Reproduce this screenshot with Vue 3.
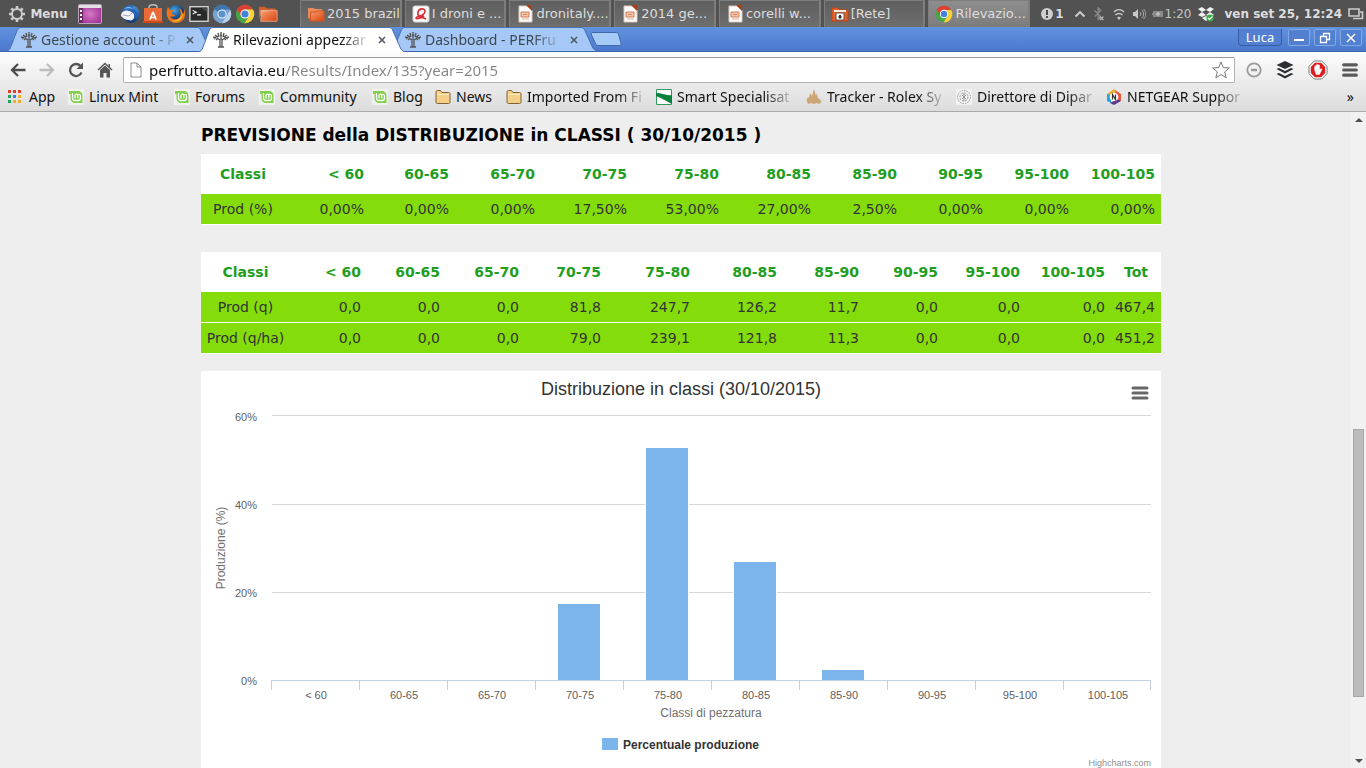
<script setup>
import { ref } from 'vue'

const launchers = [
  { id: 'mail', label: 'Thunderbird' },
  { id: 'store', label: 'Software' },
  { id: 'firefox', label: 'Firefox' },
  { id: 'terminal', label: 'Terminal' },
  { id: 'chromium', label: 'Chromium' },
  { id: 'chrome', label: 'Chrome' },
  { id: 'files', label: 'Files' },
]

const tasks = [
  { icon: 'folder-task', text: '2015 brazil' },
  { icon: 'pdf', text: 'I droni e ...' },
  { icon: 'slides', text: 'dronitaly....' },
  { icon: 'slides', text: '2014 ge...' },
  { icon: 'slides', text: 'corelli w...' },
  { icon: 'network', text: '[Rete]' },
  { icon: 'chrome', text: 'Rilevazio...', active: true },
]

const tabs = [
  { text: 'Gestione account - P' },
  { text: 'Rilevazioni appezzar', active: true },
  { text: 'Dashboard - PERFru' },
]

const bookmarks = [
  { icon: 'apps', text: 'App' },
  { icon: 'mint', text: 'Linux Mint' },
  { icon: 'mint', text: 'Forums' },
  { icon: 'mint', text: 'Community' },
  { icon: 'mint', text: 'Blog' },
  { icon: 'bm-folder', text: 'News' },
  { icon: 'bm-folder', text: 'Imported From Fi', long: true },
  { icon: 'smart', text: 'Smart Specialisat', long: true },
  { icon: 'tracker', text: 'Tracker - Rolex Sy', long: true },
  { icon: 'seal', text: 'Direttore di Dipar', long: true },
  { icon: 'netgear', text: 'NETGEAR Suppor', long: true },
]

const url = ref('perfrutto.altavia.eu/Results/Index/135?year=2015')

const classes = ['< 60', '60-65', '65-70', '70-75', '75-80', '80-85', '85-90', '90-95', '95-100', '100-105']

const percentTable = {
  widths: [84, 85, 85, 86, 92, 92, 92, 86, 86, 86, 86],
  head: ['Classi', ...classes],
  rows: [['Prod (%)', '0,00%', '0,00%', '0,00%', '17,50%', '53,00%', '27,00%', '2,50%', '0,00%', '0,00%', '0,00%']],
}

const quantityTable = {
  widths: [89, 77, 79, 79, 82, 89, 87, 82, 79, 82, 85, 50],
  head: ['Classi', ...classes, 'Tot'],
  rows: [
    ['Prod (q)', '0,0', '0,0', '0,0', '81,8', '247,7', '126,2', '11,7', '0,0', '0,0', '0,0', '467,4'],
    ['Prod (q/ha)', '0,0', '0,0', '0,0', '79,0', '239,1', '121,8', '11,3', '0,0', '0,0', '0,0', '451,2'],
  ],
}

const production = [0, 0, 0, 17.5, 53, 27, 2.5, 0, 0, 0]
const bars = production
  .map((value, i) => {
    const top = Math.round(310 - value * 4.4)
    return { x: 93 + 88 * i, y: top, height: 310 - top, value }
  })
  .filter((bar) => bar.value > 0)

const yTicks = [
  { label: '60%', line: 44, text: 50 },
  { label: '40%', line: 133, text: 138 },
  { label: '20%', line: 221, text: 226 },
  { label: '0%', line: null, text: 314 },
]
const xTicks = Array.from({ length: 11 }, (_, i) => Math.min(70 + 88 * i, 949))
</script>

<template>
  <svg class="sprite" aria-hidden="true">
    <defs>
      <linearGradient id="g-folder" x1="0" y1="0" x2="1" y2="1"><stop offset="0" stop-color="#f9a070" /><stop offset="1" stop-color="#d8430f" /></linearGradient>
      <radialGradient id="g-purple"><stop offset="0" stop-color="#d779c8" /><stop offset="1" stop-color="#a63c9a" /></radialGradient>
      <radialGradient id="g-fire" cx=".4" cy=".3"><stop offset="0" stop-color="#4aa8e0" /><stop offset="1" stop-color="#123a78" /></radialGradient>
      <linearGradient id="g-mail" x1="0" y1="0" x2="0" y2="1"><stop offset="0" stop-color="#4796dd" /><stop offset="1" stop-color="#123674" /></linearGradient>
    </defs>
    <symbol id="gear" viewBox="0 0 18 18">
      <circle cx="9" cy="9" r="5" fill="none" stroke="#ccc" stroke-width="2" />
      <path d="M9 1v3M9 14v3M1 9h3M14 9h3M3.300 3.300l2.200 2.200M12.500 12.500l2.200 2.200M3.300 14.700l2.200-2.200M12.500 5.500l2.200-2.200" stroke="#ccc" stroke-width="2.600" />
    </symbol>
    <symbol id="desktop" viewBox="0 0 24 20">
      <rect x=".5" y=".5" width="23" height="19" rx="1" fill="url(#g-purple)" stroke="#b9a3b6" />
      <path d="M1 1h22v3H1z" fill="#e4e0e4" /><path d="M1 4h4v15H1z" fill="#722769" />
      <path d="M2 6h2v2H2zM2 10h2v2H2zM2 14h2v2H2z" fill="#fff" />
    </symbol>
    <symbol id="mail" viewBox="0 0 20 20">
      <circle cx="11" cy="10" r="8.700" fill="url(#g-mail)" />
      <path d="M1 12c0-3 2-6 6-6 5 0 8 3 7 8-1 2-3 3-5 2-4 0-6-2-8-4z" fill="#f3f4f7" />
      <path d="M3 11l6 1 3-3" fill="none" stroke="#9aa9c0" />
      <path d="M2 8C3 2 9 0 14 2c-2 1-2 2-1 3 4 2 5 6 3 11 0-5-3-8-7-9-3-1-5 0-7 1z" fill="#2a66b3" />
      <path d="M4 5c3-3 6-3 9 0-3-1-6-1-9 0z" fill="#79bdf0" />
    </symbol>
    <symbol id="store" viewBox="0 0 20 20">
      <path d="M6 5V3c0-3 8-3 8 0v2" fill="none" stroke="#bbb" stroke-width="1.5" />
      <path d="M1 4h18v15H1z" fill="#ea6a36" /><path d="M0 17h20v2H0z" fill="#c64a1d" />
      <path d="M7 15.500l2.700-7h.600L13 15.500M8 13.500h4" fill="none" stroke="#fff" stroke-width="1.700" />
    </symbol>
    <symbol id="firefox" viewBox="0 0 20 20">
      <circle cx="10" cy="10" r="9" fill="url(#g-fire)" />
      <path d="M2 3C-1 9 1 19 10 19c8 0 11-8 8-14 0 3 0 4-1 5-1-4-2-5-4-6 2 3 3 9-2 11-4 1-6-1-7-3 2 1 4 1 5-1-2 0-3-1-3-2 0-2 1-2 2-3C6 6 5 6 4 6z" fill="#ee7619" />
      <path d="M17 9c0 6-5 10-11 8 7 0 10-5 11-8z" fill="#f9cb36" />
    </symbol>
    <symbol id="terminal" viewBox="0 0 22 18">
      <rect x="1" y="1" width="20" height="16" fill="#292b2b" stroke="#d5d5d5" stroke-width="1.5" />
      <path d="M4 5l4 2-4 2M9 10h4" fill="none" stroke="#fff" stroke-width="1.2" /><path d="M14 2h6v6z" fill="#484848" />
    </symbol>
    <symbol id="chromium" viewBox="0 0 20 20">
      <circle cx="10" cy="10" r="9.2" fill="#79a3cf" /><path d="M10 10L2 5.3A9.2 9.2 0 0 1 18 5.5h-8z" fill="#3f74ae" />
      <path d="M10 19.2L14.5 12l3.8-6A9.2 9.2 0 0 1 10 19.2z" fill="#b8d3ef" /><circle cx="10" cy="10" r="4.6" fill="#e9f2fb" /><circle cx="10" cy="10" r="3.6" fill="#5b92ca" />
    </symbol>
    <symbol id="chrome" viewBox="0 0 20 20">
      <circle cx="10" cy="10" r="9.2" fill="#45a847" /><path d="M10 10L2 5.4A9.2 9.2 0 0 1 18 5.5h-8z" fill="#dc4034" /><path d="M6 12L2 5.4l4-1 2 4z" fill="#dc4034" />
      <path d="M9.5 19.2L14.2 12 10 5.5h8A9.2 9.2 0 0 1 9.5 19.2z" fill="#fcd03a" /><circle cx="10" cy="10" r="4.6" fill="#fff" /><circle cx="10" cy="10" r="3.6" fill="#4483d8" />
    </symbol>
    <symbol id="files" viewBox="0 0 22 20">
      <path d="M1 16V2h7l2 2h9v3H4z" fill="#d1602a" /><path d="M3 6h14v6H3z" fill="#f4e7df" />
      <path d="M3 18l1-11h6l2-1h9v12z" fill="url(#g-folder)" stroke="#e8a481" />
    </symbol>
    <symbol id="folder-task" viewBox="0 0 18 16">
      <path d="M1 13V2h6l1 1h7v3z" fill="#e98a5b" /><path d="M3 15l1-9h5l1-1h7v10z" fill="url(#g-folder)" stroke="#d4551f" />
    </symbol>
    <symbol id="pdf" viewBox="0 0 18 18">
      <rect x="1" y="1" width="16" height="16" rx="2" fill="#fbfbfb" stroke="#d4d4d4" />
      <path d="M12 11c-4 2-7 0-6-4 1-4 7-4 7-1 0 2-2 4-5 5-2 1-4 1-4 2s2 1 4 0 4 0 6 1" fill="none" stroke="#d8303a" stroke-width="1.600" />
    </symbol>
    <symbol id="slides" viewBox="0 0 18 18">
      <path d="M3 1h8l5 4v12H3z" fill="#fff" stroke="#d9c8bd" /><path d="M10 0h6v6z" fill="#a5401b" />
      <path d="M5 7h8v5H5z" fill="#f6c5ac" stroke="#cf7d57" /><path d="M7 9.500h4" stroke="#d98562" /><path d="M6 14h7" stroke="#dcae97" />
    </symbol>
    <symbol id="network" viewBox="0 0 18 16">
      <path d="M1 14V2h6l2 2h8v11H1z" fill="#de6330" stroke="#c74310" /><path d="M3 4h12v2H3z" fill="#ffe9dc" /><path d="M5 7h8v7H5z" fill="#fff" stroke="#6b5146" /><path d="M8 12V10l1-1 1 1v2z" fill="#333" stroke="#333" />
    </symbol>
    <symbol id="alert" viewBox="0 0 14 14"><circle cx="7" cy="7" r="6" fill="#cfcfcf" /><path d="M7 3v5M7 9v2" stroke="#4b4b4b" stroke-width="2" /></symbol>
    <symbol id="caret" viewBox="0 0 12 8"><path d="M1.5 6.5L6 2l4.5 4.5" fill="none" stroke="#cfcfcf" stroke-width="1.8" /></symbol>
    <symbol id="bluetooth" viewBox="0 0 14 16"><path d="M2 4l7 7-3 3V1l3 3-7 7" fill="none" stroke="#8d8d8d" stroke-width="1.4" /><path d="M8 11l4 4M12 11l-4 4" stroke="#bbb" stroke-width="1.6" /></symbol>
    <symbol id="wifi" viewBox="0 0 14 14"><path d="M2 5c3-3 7-3 10 0M3.500 8c2-2 5-2 7 0" fill="none" stroke="#c9c9c9" stroke-width="1.5" /><path d="M5 10.500c1-1 3-1 4 0L7 13z" fill="#c9c9c9" /></symbol>
    <symbol id="speaker" viewBox="0 0 14 14"><path d="M1 5h2l3-3v10L3 9H1z" fill="#c9c9c9" /><path d="M8 5c1 1 1 3 0 4M10 3c2 2 2 6 0 8M11.500 2c3 3 3 7 0 10" fill="none" stroke="#aaa" /></symbol>
    <symbol id="battery" viewBox="0 0 12 8"><path d="M0 3h1V1h10v6H1V5H0z" fill="#8b8b8b" /><path d="M4 4h4M6 2v4" stroke="#d4d4d4" /></symbol>
    <symbol id="dropbox" viewBox="0 0 18 16">
      <path d="M5 1l4 3-4 2-4-3zM13 1l4 2-4 3-4-2zM5 6l4 3-4 2-4-2zM13 6l4 3-4 2-4-2zM5 12l4-2 4 2-4 3z" fill="#f1f1f1" />
      <circle cx="13" cy="12" r="3.6" fill="#35ad40" /><path d="M11 12l1.500 1.500 3-3" fill="none" stroke="#fff" stroke-width="1.200" />
    </symbol>
    <symbol id="screens" viewBox="0 0 16 12"><path d="M1 1h10v7H1zM5 10.500h9.500V4H12" fill="none" stroke="#ccc" stroke-width="1.600" /></symbol>
    <symbol id="tree" viewBox="0 0 16 16">
      <path d="M7 15V8L4 6M9 15V8l3-2M8 8V2M5 15h6" fill="none" stroke="#555" stroke-width="1.300" />
      <path d="M1 7l3-3M2 3l3 2M5 1l1 4M8 0v4M11 1l-1 4M14 3l-3 2M15 7l-3-2M0 5l3 1M16 5l-3 1M3 8l2-2M13 8l-2-2" stroke="#555" stroke-width="1.400" />
    </symbol>
    <symbol id="cross" viewBox="0 0 8 8"><path d="M1 1l6 6M7 1L1 7" stroke="#4d5660" stroke-width="1.500" /></symbol>
    <symbol id="back" viewBox="0 0 16 14"><path d="M15.500 7H2.500M8 1L2 7l6 6" fill="none" stroke="currentColor" stroke-width="2.300" /></symbol>
    <symbol id="reload" viewBox="0 0 16 16"><path d="M13.500 10.500A6 6 0 1 1 12.500 4" fill="none" stroke="#555" stroke-width="2.300" /><path d="M15 .500v6.500H8.500z" fill="#555" /></symbol>
    <symbol id="home" viewBox="0 0 16 16"><path d="M1 8l7-6.500L15 8" fill="none" stroke="#555" stroke-width="1.500" /><path d="M3 8l5-4.500L13 8v7.500H9.500V11h-3v4.500H3zM11.500 2H13v4l-1.500-1.500z" fill="#555" /></symbol>
    <symbol id="doc" viewBox="0 0 12 16"><path d="M1 1h6l4 4v10H1zM7 1v4h4" fill="#fff" stroke="#8b8b8b" /></symbol>
    <symbol id="star" viewBox="0 0 18 18"><path d="M9 1l2.300 5.600 6 .400-4.600 3.900 1.500 5.900L9 13.500l-5.200 3.300 1.500-5.900L.700 7l6-.400z" fill="#fff" stroke="#777" /></symbol>
    <symbol id="minus-circle" viewBox="0 0 16 16"><circle cx="8" cy="8" r="6.700" fill="none" stroke="#9b9b9b" stroke-width="1.800" /><path d="M5 8h6" stroke="#9b9b9b" stroke-width="2.500" /></symbol>
    <symbol id="buffer" viewBox="0 0 18 18"><path d="M9 0l8.500 4L9 8 .500 4zM.500 8l2.500-1 6 3 6-3 2.500 1L9 12.500zM.500 13L3 12l6 3 6-3 2.500 1L9 17.500z" fill="#2b2f33" /></symbol>
    <symbol id="stop" viewBox="0 0 20 20">
      <path d="M6.300 1h7.400L19 6.300v7.400L13.700 19H6.300L1 13.700V6.300z" fill="#fff" stroke="#777" /><path d="M7 2.800h6l4.200 4.200v6L13 17.200H7L2.800 13V7z" fill="#de1a1a" />
      <path d="M6.500 9.500V6.500h1.200V9V5h1.300v4-4.500h1.300V9 5h1.300v5l1.500-1.500 1 .800-2.600 5.200H8z" fill="#fff" stroke="#fff" stroke-width=".4" />
    </symbol>
    <symbol id="bars" viewBox="0 0 14 14"><path d="M1.500 2.500h11M1.500 7h11M1.500 11.500h11" stroke="#5a5a5a" stroke-width="2.800" stroke-linecap="round" /></symbol>
    <symbol id="apps" viewBox="0 0 16 16">
      <path d="M0 1h3v3H0zM5 1h3v3H5zM10 1h3v3H10z" fill="#e33e2b" /><path d="M0 6h3v3H0z" fill="#1ea45c" /><path d="M5 6h3v3H5z" fill="#3f7de8" /><path d="M10 6h3v3H10zM5 11h3v3H5zM10 11h3v3H10z" fill="#efb026" /><path d="M0 11h3v3H0z" fill="#1ea45c" />
    </symbol>
    <symbol id="mint" viewBox="0 0 16 16">
      <path d="M0 0h16v16H0z" fill="#f1f1ef" /><path d="M1 2h9a4.500 4.500 0 0 1 4.500 4.500V14H7a4.500 4.500 0 0 1-4.500-4.500V5H1z" fill="#82cf49" />
      <path d="M4.500 4v5a2.500 2.500 0 0 0 2.500 2.500h3A2.500 2.500 0 0 0 12.500 9V7a1.500 1.500 0 0 0-2.700-1A1.500 1.500 0 0 0 7 7v2.500M9.800 6.500v3" fill="none" stroke="#fff" stroke-width="1.300" />
    </symbol>
    <symbol id="bm-folder" viewBox="0 0 16 16"><path d="M1 13V3c0-1 .500-1.500 1.500-1.500h3L7 3.500h6.500c1 0 1.500.500 1.500 1.500v8c0 1-.500 1.500-1.500 1.500h-11C1.500 14.500 1 14 1 13z" fill="#f4cf87" stroke="#80603b" /><path d="M2 5.500h12" stroke="#fff0cb" /></symbol>
    <symbol id="smart" viewBox="0 0 16 16"><path d="M.500.500h15v15H.500z" fill="#fff" stroke="#319b5c" /><path d="M0 4c6 0 10 3 16 2v9C10 12 6 9 0 7z" fill="#05803d" /></symbol>
    <symbol id="tracker" viewBox="0 0 16 16"><path d="M2 15L.500 11 2 8l1 1 1-5 2 3 2-7 2 7 1-3 1 6 1-1 2.500 4L13 15l-2-1-3 1-3-1z" fill="#cca576" /></symbol>
    <symbol id="seal" viewBox="0 0 16 16"><path d="M0 0h16v16H0z" fill="#f2f2f2" /><g fill="none" stroke="#999"><circle cx="8" cy="8" r="6.500" stroke-dasharray="1.500 1" /><circle cx="8" cy="8" r="4" stroke-dasharray="2 1" /><path d="M6 6l4 4M10 6l-4 4M8 4v8" /></g></symbol>
    <symbol id="netgear" viewBox="0 0 16 16"><path d="M8 0L1 5l3 4 7-6z" fill="#f2b22d" /><path d="M1 5v7l4 2V6z" fill="#24a6db" /><path d="M4 14l4 2 7-4-2-3z" fill="#5f388c" /><path d="M9 1l6 4v7l-4-2z" fill="#e9573f" /><circle cx="8" cy="8" r="4.300" fill="#fff" /><path d="M6.500 10.500v-5l3 5v-5" fill="none" stroke="#333" stroke-width="1.200" /></symbol>
    <symbol id="win-min" viewBox="0 0 12 12"><path d="M1 8h10" stroke="#fff" stroke-width="2" /></symbol>
    <symbol id="win-max" viewBox="0 0 12 12"><path d="M1.500 4.500h6v6h-6zM4.500 4V1.500h6v6H8" fill="none" stroke="#fff" stroke-width="1.300" /></symbol>
    <symbol id="win-close" viewBox="0 0 12 12"><path d="M2 2l8 8M10 2l-8 8" stroke="#fff" stroke-width="1.500" /></symbol>
  </svg>

  <div class="desktop">
    <header class="panel">
      <button class="menu"><svg class="i18"><use href="#gear" /></svg>Menu</button>
      <button class="show-desktop" aria-label="Desktop"><svg class="i-desktop"><use href="#desktop" /></svg></button>
      <nav class="launchers">
        <button v-for="item in launchers" :key="item.id" :aria-label="item.label"><svg class="i20"><use :href="'#' + item.id" /></svg></button>
      </nav>
      <div class="tasks">
        <button v-for="task in tasks" :key="task.text" class="task" :class="{ active: task.active }">
          <svg class="i18"><use :href="'#' + task.icon" /></svg><span>{{ task.text }}</span>
        </button>
      </div>
      <div class="tray">
        <span class="tray-item strong"><svg class="i14"><use href="#alert" /></svg>1</span>
        <svg class="i-caret"><use href="#caret" /></svg>
        <svg class="i14"><use href="#bluetooth" /></svg>
        <svg class="i14"><use href="#wifi" /></svg>
        <svg class="i14"><use href="#speaker" /></svg>
        <span class="tray-item"><svg class="i-battery"><use href="#battery" /></svg>1:20</span>
        <svg class="i18"><use href="#dropbox" /></svg>
        <time class="clock">ven set 25, 12:24</time>
        <svg class="i16"><use href="#screens" /></svg>
      </div>
    </header>

    <div class="tabstrip">
      <div v-for="tab in tabs" :key="tab.text" class="tab" :class="{ active: tab.active }">
        <svg class="tab-shape" viewBox="0 0 210 25" preserveAspectRatio="none" aria-hidden="true">
          <path d="M0 25C4 25 5 23 6 20L12 4C13 1 14 .500 17 .500H191C194 .500 195 1 196 4L203 20C204 23 206 25 210 25" />
        </svg>
        <svg class="i16"><use href="#tree" /></svg>
        <a href="#" class="tab-title">{{ tab.text }}</a>
        <button aria-label="Chiudi"><svg class="i8"><use href="#cross" /></svg></button>
      </div>
      <button class="new-tab" aria-label="Nuova scheda">
        <svg viewBox="0 0 32 16"><path d="M3 1.500h22c2 0 3 .500 3.500 2L31 12c.500 2 0 2.500-2 2.500H9c-2 0-3-.500-3.500-2L1.500 4C1 2 1 1.500 3 1.500z" fill="#a7cbf7" stroke="#3f68ab" /></svg>
      </button>
      <div class="window-controls">
        <button class="user">Luca</button>
        <button aria-label="Riduci"><svg class="i12"><use href="#win-min" /></svg></button>
        <button aria-label="Ripristina"><svg class="i12"><use href="#win-max" /></svg></button>
        <button aria-label="Chiudi finestra"><svg class="i12"><use href="#win-close" /></svg></button>
      </div>
    </div>

    <div class="chrome-bars">
      <div class="toolbar">
        <button aria-label="Indietro"><svg class="i16 dark"><use href="#back" /></svg></button>
        <button aria-label="Avanti"><svg class="i16 faded forward"><use href="#back" /></svg></button>
        <button aria-label="Ricarica"><svg class="i16"><use href="#reload" /></svg></button>
        <button aria-label="Home"><svg class="i16"><use href="#home" /></svg></button>
        <div class="omnibox">
          <svg class="i16"><use href="#doc" /></svg>
          <input v-model="url" type="text" aria-label="Indirizzo" />
          <button aria-label="Preferiti"><svg class="i18"><use href="#star" /></svg></button>
        </div>
        <div class="extensions">
          <button aria-label="Zoom"><svg class="i16"><use href="#minus-circle" /></svg></button>
          <button aria-label="Buffer"><svg class="i18"><use href="#buffer" /></svg></button>
          <button aria-label="Blocco annunci"><svg class="i20"><use href="#stop" /></svg></button>
          <button aria-label="Menu del browser"><svg class="i16"><use href="#bars" /></svg></button>
        </div>
      </div>
      <nav class="bookmarks">
        <a v-for="mark in bookmarks" :key="mark.text" href="#" :class="{ long: mark.long }">
          <svg class="i16"><use :href="'#' + mark.icon" /></svg><span>{{ mark.text }}</span>
        </a>
        <button class="more" aria-label="Altri preferiti">»</button>
      </nav>
    </div>

    <div class="viewport">
      <main>
        <div class="content">
          <h3>PREVISIONE della DISTRIBUZIONE in CLASSI ( 30/10/2015 )</h3>
          <table v-for="(table, t) in [percentTable, quantityTable]" :key="t">
            <colgroup><col v-for="(w, i) in table.widths" :key="i" :style="{ width: w + 'px' }" /></colgroup>
            <thead>
              <tr><th v-for="cell in table.head" :key="cell" scope="col" :class="{ tot: cell === 'Tot' }">{{ cell }}</th></tr>
            </thead>
            <tbody>
              <tr v-for="row in table.rows" :key="row[0]">
                <th scope="row">{{ row[0] }}</th>
                <td v-for="(cell, i) in row.slice(1)" :key="i">{{ cell }}</td>
              </tr>
            </tbody>
          </table>

          <section class="chart">
            <svg viewBox="0 0 960 400" role="img" aria-label="Distribuzione in classi">
              <text class="title" x="480" y="24">Distribuzione in classi (30/10/2015)</text>
              <g v-for="tick in yTicks" :key="tick.label">
                <rect v-if="tick.line" class="grid" x="71" :y="tick.line" width="879" height="1" />
                <text class="label end" x="56" :y="tick.text">{{ tick.label }}</text>
              </g>
              <rect v-for="bar in bars" :key="bar.x" class="bar" :x="bar.x" :y="bar.y" width="42" :height="bar.height" />
              <rect class="axis" x="70" y="309" width="880" height="1" />
              <rect v-for="x in xTicks" :key="x" class="axis" :x="x" y="310" width="1" height="9" />
              <text v-for="(name, i) in classes" :key="name" class="label" :x="115 + 88 * i" y="328">{{ name }}</text>
              <text class="axis-title" x="510" y="346">Classi di pezzatura</text>
              <text class="axis-title" transform="translate(24 177) rotate(-90)">Produzione (%)</text>
              <rect class="legend-key" x="401" y="367" width="16" height="12" />
              <text class="legend" x="422" y="378">Percentuale produzione</text>
              <a href="#"><text class="credits" x="950" y="395">Highcharts.com</text></a>
            </svg>
            <button class="chart-menu" aria-label="Menu del grafico">
              <svg viewBox="0 0 18 14"><path d="M2 2h14M2 7h14M2 12h14" stroke="#666" stroke-width="3" stroke-linecap="round" /></svg>
            </button>
          </section>
        </div>
      </main>
      <div class="scrollbar" aria-hidden="true">
        <svg viewBox="0 0 8 4"><path d="M0 4l4-4 4 4z" fill="#505050" /></svg>
        <div class="track"><div class="thumb"></div></div>
        <svg viewBox="0 0 8 4"><path d="M0 0l4 4 4-4z" fill="#505050" /></svg>
      </div>
    </div>
  </div>
</template>

<style>
body {
  overflow: hidden;
}
</style>

<style scoped>
* {
  box-sizing: border-box;
}
button {
  padding: 0;
  border: 0;
  background: none;
  font: inherit;
  color: inherit;
  display: flex;
  align-items: center;
  justify-content: center;
}
a {
  color: inherit;
  text-decoration: none;
}
svg {
  flex: none;
  display: block;
}
.sprite {
  position: absolute;
  width: 0;
  height: 0;
}
.i8 { width: 8px; height: 8px; }
.i12 { width: 12px; height: 12px; }
.i14 { width: 14px; height: 14px; }
.i16 { width: 16px; height: 16px; }
.i18 { width: 18px; height: 18px; }
.i20 { width: 20px; height: 20px; }
.i-desktop { width: 24px; height: 20px; }
.i-caret { width: 12px; height: 8px; }
.i-battery { width: 12px; height: 8px; }
.dark { color: #4d4d4d; }
.faded { color: #bdbdbd; }
.forward { transform: rotate(180deg); }

.desktop {
  height: 100vh;
  display: flex;
  flex-direction: column;
  overflow: hidden;
  background: #eee;
}

/* System panel */
.panel {
  display: flex;
  align-items: center;
  height: 27px;
  flex: none;
  background: #525252;
  color: #ddd;
  font: 12px/16px "DejaVu Sans", sans-serif;
}
.menu {
  margin-left: 7px;
  width: 62px;
  gap: 4px;
  font-weight: bold;
}
.show-desktop {
  margin: 0 16px 0 9px;
}
.launchers {
  display: flex;
  gap: 3px;
  margin: 0 22px 0 2px;
}
.tasks {
  flex: 1;
  display: flex;
  gap: 3px;
  height: 27px;
}
.task {
  flex: 1;
  min-width: 0;
  justify-content: flex-start;
  gap: 2px;
  padding-left: 6px;
  font-size: 13px;
  white-space: nowrap;
  background: linear-gradient(#5f5f5f, #6e6e6e);
  border: 1px solid #7d7d7d;
  border-right-width: 2px;
  border-bottom-width: 0;
}
.task.active {
  background: linear-gradient(#8e8e8e, #7c7c7c);
}
.tray {
  display: flex;
  align-items: center;
  gap: 6px;
  margin: 0 2px 0 10px;
}
.tray-item {
  display: flex;
  align-items: center;
  gap: 1px;
  color: #c4c4c4;
}
.strong,
.clock {
  font-weight: bold;
  color: #ddd;
}
.strong {
  margin-right: 4px;
}
.clock {
  margin-left: 3px;
}

/* Tabs */
.tabstrip {
  display: flex;
  align-items: flex-end;
  height: 25px;
  flex: none;
  background: linear-gradient(#6192de, #4b79cd);
  border-bottom: 1px solid #3a62ad;
  padding-left: 5px;
  font: 14px/20px "Noto Sans", sans-serif;
  color: #3f4750;
}
.tab {
  position: relative;
  display: flex;
  align-items: center;
  width: 210px;
  height: 24px;
  margin-right: -18px;
  padding: 1px 18px 0 16px;
  gap: 4px;
}
.tab-shape {
  position: absolute;
  inset: 0;
  width: 100%;
  height: 100%;
  fill: #a6c8f6;
  stroke: #4670b3;
}
.tab > :not(.tab-shape) {
  position: relative;
}
.tab.active {
  z-index: 1;
  height: 25px;
  margin-bottom: -1px;
  padding-top: 0;
  color: #111;
}
.tab.active .tab-shape {
  fill: #fff;
}
.tab-title {
  flex: 1;
  white-space: nowrap;
  mask-image: linear-gradient(to right, #000 calc(100% - 30px), transparent);
}
.tab button {
  width: 14px;
}
.new-tab {
  align-self: center;
  margin-left: 9px;
}
.new-tab svg {
  width: 32px;
  height: 16px;
}
.window-controls {
  display: flex;
  align-self: flex-start;
  gap: 4px;
  margin: 2px 4px 0 auto;
}
.window-controls button {
  width: 22px;
  height: 17px;
  border: 1px solid #82a8e6;
  border-radius: 2px;
  background: #527fcf;
}
.window-controls .user {
  width: 44px;
  margin-right: 2px;
  border-color: #365ea6;
  border-top: 0;
  border-radius: 0 0 4px 4px;
  font-size: 13px;
  color: #fff;
}

/* Navigation and bookmarks */
.chrome-bars {
  flex: none;
  background: linear-gradient(#fdfdfd, #dcdcdc);
  border-bottom: 1px solid #aaa;
  padding-top: 5px;
}
.toolbar {
  display: flex;
  align-items: center;
  height: 26px;
  padding-left: 3px;
}
.toolbar > button {
  width: 29px;
}
.omnibox {
  flex: 1;
  display: flex;
  align-items: center;
  height: 26px;
  margin-left: 4px;
  padding: 0 4px;
  background: #fff;
  border: 1px solid #b3b3b3;
  border-top-color: #999;
  border-radius: 2px;
}
.omnibox input {
  flex: 1;
  min-width: 0;
  margin-left: 5px;
  padding: 0;
  border: 0;
  font: 15px/20px "Noto Sans", sans-serif;
  color: transparent;
  background: linear-gradient(to right, #111 137px, #858585 137px);
  background-clip: text;
}
.extensions {
  display: flex;
  justify-content: space-between;
  width: 112px;
  margin: 0 8px 0 11px;
}
.bookmarks {
  display: grid;
  grid-template-columns: 60px 106px 85px 113px 63px 71px repeat(5, 150px) 1fr;
  align-items: center;
  height: 28px;
  padding-left: 8px;
  font: 14px/20px "Noto Sans", sans-serif;
  color: #111;
}
.bookmarks a {
  display: flex;
  align-items: center;
  gap: 5px;
}
.bookmarks span {
  white-space: nowrap;
}
.bookmarks .long span {
  mask-image: linear-gradient(to right, #000 calc(100% - 24px), rgb(0 0 0 / 0.2));
}
.more {
  justify-self: end;
  margin-right: 12px;
}

/* Page */
.viewport {
  flex: 1;
  min-height: 0;
  display: flex;
}
main {
  flex: 1;
  overflow: hidden;
  padding-left: 11px;
  background: #eee;
  font: 14px/20px Verdana, "DejaVu Sans", sans-serif;
  color: #333;
}
.content {
  max-width: 960px;
  margin: 0 auto;
}
h3 {
  margin: 0;
  padding: 12px 0 8px;
  font-size: 17px;
  line-height: 22px;
  color: #000;
}
table {
  width: 100%;
  table-layout: fixed;
  border-collapse: separate;
  border-spacing: 0;
  margin-bottom: 27px;
}
table + table {
  margin-bottom: 17px;
}
th,
td {
  padding: 5px 6px;
  text-align: right;
  white-space: nowrap;
}
td:last-child {
  padding-left: 0;
}
thead th {
  padding: 10px 6px;
  background: #fff;
  color: #1f9e1f;
}
tr > th:first-child,
.tot {
  text-align: center;
  padding-left: 0;
  padding-right: 0;
}
tbody th {
  font-weight: normal;
}
tbody tr > * {
  background: #84dc0a;
  border-bottom: 1px solid #fff;
}
.chart {
  position: relative;
  background: #fff;
}
.chart > svg {
  width: 100%;
  font-family: "Liberation Sans", Arial, sans-serif;
}
.chart text {
  text-anchor: middle;
}
.title { font-size: 18px; fill: #333; }
.label { font-size: 11px; fill: #606060; }
.axis-title { font-size: 12px; fill: #707070; }
.chart .end { text-anchor: end; }
.chart .legend { font-size: 12px; font-weight: bold; fill: #333; text-anchor: start; }
.chart .credits { font-size: 9px; fill: #909090; text-anchor: end; }
.grid { fill: #d8d8d8; }
.axis { fill: #c0d0e0; }
.bar { fill: #7cb5ec; outline: 1px solid #fff; }
.legend-key { fill: #7cb5ec; }
.chart-menu {
  position: absolute;
  top: 11px;
  right: 9px;
  width: 24px;
  height: 22px;
}
.chart-menu svg {
  width: 18px;
  height: 14px;
}
.scrollbar {
  width: 15px;
  display: flex;
  flex-direction: column;
  align-items: center;
  padding: 6px 0 5px;
  background: #f1f1f1;
}
.scrollbar svg {
  width: 8px;
  height: 4px;
}
.track {
  flex: 1;
  width: 11px;
  margin: 5px 0;
  display: flex;
  flex-direction: column;
}
.track::before {
  content: "";
  flex: 304;
}
.track::after {
  content: "";
  flex: 57;
}
.thumb {
  flex: 269;
  background: #bcbcbc;
  border: 1px solid #a8a8a8;
}
</style>
